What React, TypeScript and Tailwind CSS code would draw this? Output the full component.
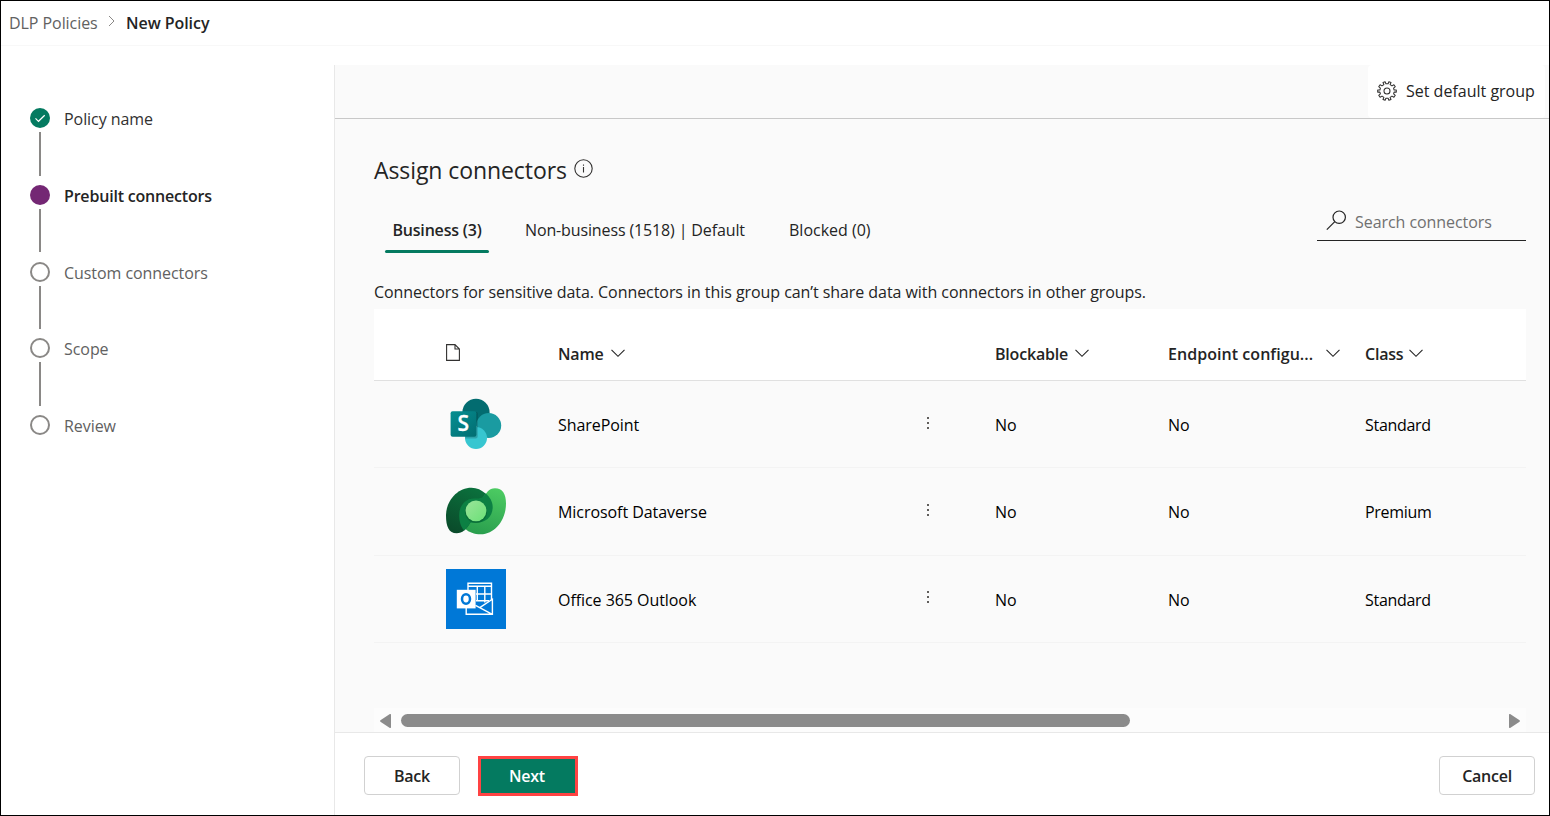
import type { ReactNode } from "react";

function Chevron() {
  return (
    <svg width="14" height="9" viewBox="0 0 14 9" fill="none" stroke="#242424" strokeWidth="1.1">
      <path d="M0.5 0.8 L7 7.3 L13.5 0.8" />
    </svg>
  );
}

function SharePointIcon() {
  return (
    <svg width="60" height="60" viewBox="0 0 60 60">
      <defs>
        <linearGradient id="sp" x1="0" y1="0" x2="1" y2="1">
          <stop offset="0" stopColor="#058f92" />
          <stop offset="1" stopColor="#026d71" />
        </linearGradient>
      </defs>
      <circle cx="30" cy="17.4" r="13.6" fill="#036c70" />
      <circle cx="42.7" cy="30.5" r="12.5" fill="#1a9ba1" />
      <circle cx="30" cy="43" r="11" fill="#37c6d0" />
      <path d="M17 17h13.200a1.5 1.5 0 0 1 1.500 1.500V41.500a2 2 0 0 1-2 2H19.300z" fill="#000" opacity=".18" />
      <rect x="4.6" y="16.2" width="25.8" height="25.6" rx="2" fill="url(#sp)" />
      <text x="17.3" y="36.4" textAnchor="middle" fontSize="21" className="font-['Open_Sans'] font-semibold" fill="#fff" stroke="#fff" strokeWidth="0.3">S</text>
    </svg>
  );
}

function DataverseIcon() {
  return (
    <svg width="60" height="60" viewBox="0 0 60 60">
      <defs>
        <linearGradient id="dvDark" x1="0.6" y1="0" x2="0.2" y2="1">
          <stop offset="0" stopColor="#0b6f3c" />
          <stop offset="1" stopColor="#0a4a2a" />
        </linearGradient>
        <linearGradient id="dvLight" x1="0.8" y1="0" x2="0.5" y2="1">
          <stop offset="0" stopColor="#4ccb62" />
          <stop offset="1" stopColor="#2a9f4e" />
        </linearGradient>
        <linearGradient id="dvCore" x1="0" y1="0" x2="1" y2="1">
          <stop offset="0" stopColor="#9be59a" />
          <stop offset="1" stopColor="#6be077" />
        </linearGradient>
      </defs>
      <path d="M49 6.3C56.5 6.3 60 12 60 21.5C60 38 49 52.3 34.7 52.3C22 52.3 13.3 44 13.3 32.7L37 17C40 11 43 6.3 49 6.3Z" fill="url(#dvLight)" />
      <path d="M25.5 5.7C11 5.7 0 19 0 33.5C0 44 2.5 51.3 10.7 51.3C16.5 51.3 20 47.5 24.5 40.5L39.500 11.500C35.5 8 31 5.7 25.5 5.7Z" fill="url(#dvDark)" />
      <path d="M39.500 11.300C44 15 46.7 20 46.7 25C46.7 35 39.5 40.8 30 40.8L24.5 40.5C22 44.7 20 47 18.3 48.6C14.5 44.5 13.2 39 13.2 33C13.2 24 19 16.5 28 16.5C33 16.5 36 17.5 39.500 11.300Z" fill="#0c8043" />
      <circle cx="30" cy="30" r="11" fill="#075d2f" opacity=".55" />
      <circle cx="30" cy="28.8" r="10.4" fill="url(#dvCore)" />
    </svg>
  );
}

function OutlookIcon() {
  return (
    <svg width="60" height="60" viewBox="0 0 60 60">
      <rect width="60" height="60" fill="#0078d7" />
      <g fill="none" stroke="#fff" strokeWidth="1.4">
        <path d="M22 21V14.200h23.500V31" />
        <path d="M22 17.300h23.500M30 25h15.500M30 31.700h13M31.300 17.500v15M38.800 17.500v16" />
        <path d="M20.200 39v6.300h26.200V30.200L33.800 38.600M29.500 36.300L46.300 45.300" />
      </g>
      <rect x="10.8" y="20.8" width="18.800" height="18.600" fill="#fff" />
      <ellipse cx="20" cy="30" rx="4" ry="4.7" fill="none" stroke="#0078d7" strokeWidth="2.5" />
    </svg>
  );
}

function GearIcon() {
  return (
    <svg width="20" height="20" viewBox="0 0 20 20" fill="none" stroke="#323130" strokeWidth="1.05" strokeLinejoin="round">
      <circle cx="10" cy="10" r="3" />
      <path d="M8.9 2.800 L8.1 0.700 L6 1.500 L6.900 3.600 L5 4.900 L3.100 3.700 L1.700 5.700 L3.400 7.100 L2.900 9 L0.700 9 L0.700 11.100 L2.900 11.100 L3.400 12.900 L1.700 14.300 L3.100 16.300 L5 15.100 L6.900 16.400 L6 18.500 L8.100 19.300 L8.900 17.200 L11.100 17.200 L11.900 19.300 L14 18.500 L13.100 16.400 L15 15.100 L16.900 16.300 L18.300 14.300 L16.600 12.900 L17.100 11.100 L19.300 11.100 L19.300 9 L17.100 9 L16.600 7.100 L18.300 5.700 L16.900 3.700 L15 4.900 L13.100 3.600 L14 1.500 L11.900 0.700 L11.100 2.800 Z" />
    </svg>
  );
}

type StepState = "done" | "current" | "todo";

const steps: { label: string; state: StepState }[] = [
  { label: "Policy name", state: "done" },
  { label: "Prebuilt connectors", state: "current" },
  { label: "Custom connectors", state: "todo" },
  { label: "Scope", state: "todo" },
  { label: "Review", state: "todo" },
];

const labelStyle: Record<StepState, string> = {
  done: "text-[#323130]",
  current: "font-semibold text-[#242424] tracking-[-0.19px]",
  todo: "text-[#616161]",
};

function StepDot({ state }: { state: StepState }) {
  if (state === "done")
    return (
      <svg width="20" height="20" viewBox="0 0 20 20">
        <circle cx="10" cy="10" r="10" fill="#047a60" />
        <path d="M5.5 10.3 L8.5 13.3 L14.7 7.2" fill="none" stroke="#fff" strokeWidth="1.2" />
      </svg>
    );
  if (state === "current") return <div className="size-5 rounded-full bg-[#742774]" />;
  return <div className="size-5 rounded-full border-2 border-[#8a8886] bg-white" />;
}

const rows: { name: string; icon: ReactNode; cls: string }[] = [
  { name: "SharePoint", icon: <SharePointIcon />, cls: "Standard" },
  { name: "Microsoft Dataverse", icon: <DataverseIcon />, cls: "Premium" },
  { name: "Office 365 Outlook", icon: <OutlookIcon />, cls: "Standard" },
];

const columns = "grid grid-cols-[184px_437px_173px_197px_1fr] items-center";

export default function App() {
  return (
    <div className="flex h-[816px] w-[1550px] flex-col overflow-hidden border border-black bg-white font-['Open_Sans','Noto_Sans',sans-serif] text-[16px] leading-[22px] tracking-[-0.06px] text-[#242424]">
      <header className="flex h-[45px] shrink-0 items-center border-b border-[#f8f8f8] pl-2">
        <span className="w-[99px] text-[#616161]">DLP Policies</span>
        <svg width="8" height="12" viewBox="0 0 8 12" fill="none" stroke="#8a8886" className="mb-1">
          <path d="M1 1 L6 6 L1 11" />
        </svg>
        <span className="ml-[10px] font-semibold">New Policy</span>
      </header>

      <div className="flex min-h-0 flex-1 pt-[19px]">
        <nav className="w-[333px] shrink-0 pt-[43px] pl-[29px]">
          {steps.map((s, i) => (
            <div key={s.label} className="flex h-[76.75px] gap-[14px]">
              <div className="flex w-5 flex-col items-center gap-1">
                <StepDot state={s.state} />
                {i < steps.length - 1 && <div className="h-[43.5px] w-[2px] bg-[#8a8886]" />}
              </div>
              <span className={labelStyle[s.state]}>{s.label}</span>
            </div>
          ))}
        </nav>

        <main className="flex min-w-0 flex-1 flex-col border-l border-[#e8e8e8] bg-[#fafafa]">
          <div className="flex h-[54px] shrink-0 justify-end border-b border-[#c8c8c8] pr-1">
            <button className="flex w-[177px] items-center gap-[9px] rounded bg-white pb-px pl-[9px]">
              <GearIcon />
              <span className="whitespace-nowrap tracking-[0px]">Set default group</span>
            </button>
          </div>

          <section className="flex min-h-0 flex-1 flex-col pr-[23px] pl-[39px]">
            <div className="mt-[35px] flex h-[32px] items-center gap-[7px]">
              <h1 className="text-[23px] tracking-[-0.08px]">Assign connectors</h1>
              <svg width="19" height="19" viewBox="0 0 19 19" fill="none" stroke="#323130" strokeWidth="1.1" className="mb-1">
                <circle cx="9.5" cy="9.5" r="8.7" />
                <path d="M9.5 8v5.4M9.5 5.4v1.3" />
              </svg>
            </div>

            <div className="mt-[21px] flex h-[46px] justify-between">
              <div className="flex pl-[11px]">
                <div className="flex w-[104px] flex-col items-center">
                  <span className="mt-[12px] font-semibold tracking-[-0.18px] whitespace-nowrap">Business (3)</span>
                  <div className="mt-auto h-[3px] w-full rounded-full bg-[#047a60]" />
                </div>
                <span className="mt-[12px] ml-[36px] w-[264px] tracking-[-0.13px] whitespace-nowrap">Non-business (1518) | Default</span>
                <span className="mt-[12px] tracking-[0px] whitespace-nowrap">Blocked (0)</span>
              </div>
              <div className="flex h-[34px] w-[209px] items-center border-b border-[#242424] pb-[3px] pl-[9px]">
                <svg width="21" height="21" viewBox="0 0 21 21" fill="none" stroke="#242424" strokeWidth="1.2" className="mb-[3px]">
                  <circle cx="13.2" cy="7.2" r="6.2" />
                  <path d="M8.8 11.6 L0.8 19.6" />
                </svg>
                <span className="ml-2 whitespace-nowrap text-[#707070]">Search connectors</span>
              </div>
            </div>

            <p className="mt-[28px] whitespace-nowrap">
              Connectors for sensitive data. Connectors in this group can’t share data with connectors in other groups.
            </p>

            <div className="mt-[6px]">
              <div className={`${columns} h-[72px] border-b border-[#e0e0e0] bg-white pt-[18px] font-semibold tracking-[-0.2px]`}>
                <svg width="14" height="17" viewBox="0 0 14 17" fill="none" stroke="#323130" strokeWidth="1.1" className="mb-[2px] ml-[72px]">
                  <path d="M0.6 0.6 H9 L13.4 5 V16.4 H0.6 Z M9 0.6 V5 H13.4" />
                </svg>
                <div className="flex items-center gap-[7px]"><span>Name</span><Chevron /></div>
                <div className="flex items-center gap-[7px]"><span>Blockable</span><Chevron /></div>
                <div className="flex items-center"><span className="w-[158px] tracking-[0.05px]">Endpoint configu...</span><Chevron /></div>
                <div className="flex items-center gap-[6px]"><span>Class</span><Chevron /></div>
              </div>
              {rows.map((r) => (
                <div key={r.name} className={`${columns} h-[87.4px] border-b border-[#f3f3f3] pt-[0.9px] text-black`}>
                  <div className="pl-[72px]">{r.icon}</div>
                  <div className="flex items-center justify-between pr-[65px]">
                    <span className="pt-[0.8px]">{r.name}</span>
                    <svg width="4" height="14" viewBox="0 0 4 14" fill="#605e5c" className="mb-1">
                      <rect x="1" y="1" width="2" height="2" />
                      <rect x="1" y="6" width="2" height="2" />
                      <rect x="1" y="11" width="2" height="2" />
                    </svg>
                  </div>
                  <span className="pt-[0.8px]">No</span>
                  <span className="pt-[0.8px]">No</span>
                  <span className="pt-[0.8px] tracking-[-0.3px]">{r.cls}</span>
                </div>
              ))}
            </div>

            <div className="mt-auto flex h-[24px] items-center bg-[#fcfcfc] pl-[6px]">
              <svg width="11" height="14" viewBox="0 0 11 14" fill="#8b8b8b" className="mt-px"><path d="M11 1v12a1 1 0 0 1-1.5.8L.8 8a1.2 1.2 0 0 1 0-2L9.500.2A1 1 0 0 1 11 1z" /></svg>
              <div className="ml-[10px] h-[13px] w-[729px] rounded-full bg-[#8b8b8b]" />
              <svg width="11" height="14" viewBox="0 0 11 14" fill="#8b8b8b" className="mt-px mr-[6px] ml-auto"><path d="M0 1v12a1 1 0 0 0 1.500.8L10.200 8a1.2 1.2 0 0 0 0-2L1.500.2A1 1 0 0 0 0 1z" /></svg>
            </div>
          </section>

          <footer className="flex h-[83px] shrink-0 border-t border-[#e8e8e8] bg-white pt-[23px] pr-[14px] pl-[29px] font-semibold tracking-[-0.25px]">
            <button className="h-[39px] w-[96px] rounded border border-[#d1d1d1]">Back</button>
            <button className="ml-[18px] h-[40px] w-[100px] border-[3px] border-[#ff4343] bg-[#047a60] pr-[2px] text-white">Next</button>
            <button className="ml-auto h-[39px] w-[96px] rounded border border-[#d1d1d1]">Cancel</button>
          </footer>
        </main>
      </div>
    </div>
  );
}
